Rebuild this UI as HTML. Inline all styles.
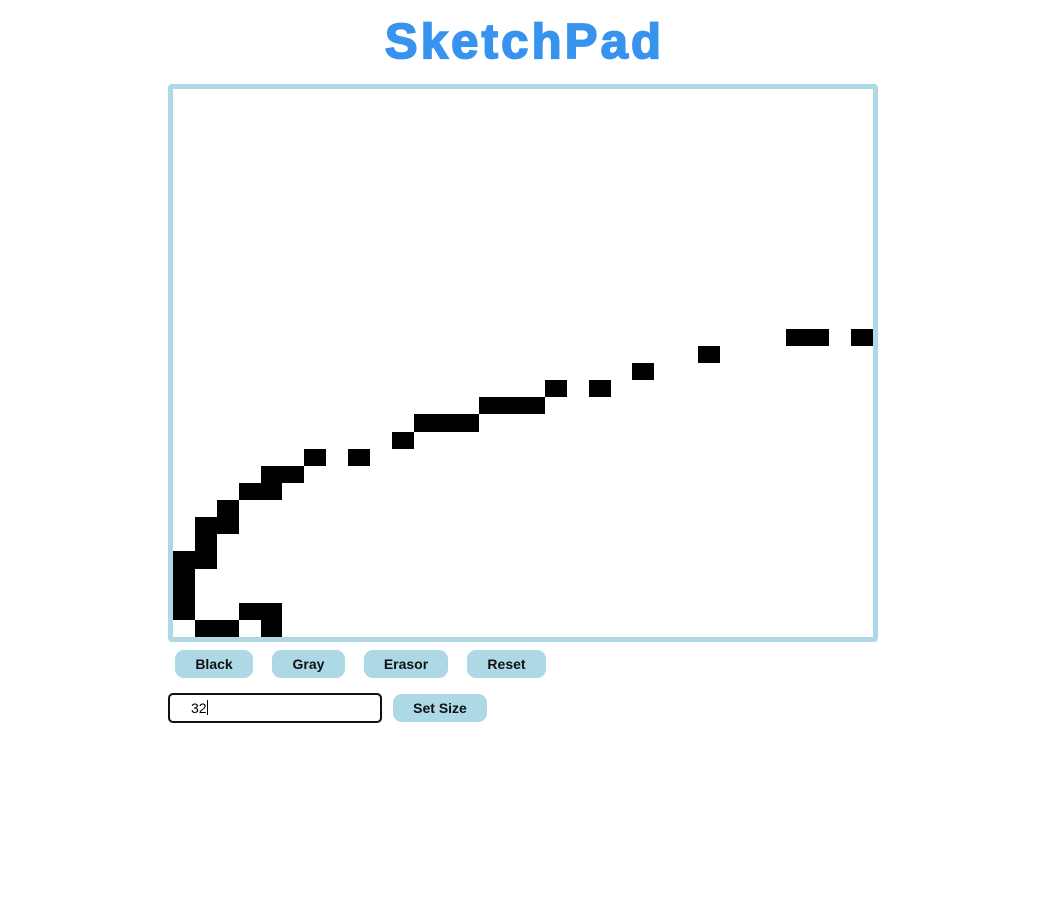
<!DOCTYPE html>
<html><head><meta charset="utf-8"><style>
body{margin:0;background:#fff;width:1060px;height:923px;position:relative;font-family:"Liberation Sans",Arial,sans-serif;}
h1{position:absolute;left:0;width:1046px;top:16px;margin:0;text-align:center;font-size:49px;font-weight:bold;color:#3793ee;-webkit-text-stroke:1.8px #3793ee;letter-spacing:3.2px;padding-left:3px;box-sizing:border-box;line-height:52px;}
#pad{position:absolute;left:168px;top:84px;width:700px;height:548px;border:5px solid #add8e6;border-radius:4px;display:grid;grid-template-columns:repeat(32,1fr);grid-template-rows:repeat(32,1fr);background:#fff;}
#pad div{background:#000;}
.btn{position:absolute;background:#add8e6;border-radius:9px;font-size:14px;font-weight:bold;color:#111;text-align:center;line-height:28px;height:28px;top:650px;}
#inp{position:absolute;left:168px;top:693px;width:210px;height:26px;border:2px solid #111;border-radius:5px;font-size:14px;line-height:26px;}
</style></head><body>
<h1>SketchPad</h1>
<div id="pad">
<div style="grid-row:15;grid-column:29"></div><div style="grid-row:15;grid-column:30"></div><div style="grid-row:15;grid-column:32"></div>
<div style="grid-row:16;grid-column:25"></div>
<div style="grid-row:17;grid-column:22"></div>
<div style="grid-row:18;grid-column:18"></div><div style="grid-row:18;grid-column:20"></div>
<div style="grid-row:19;grid-column:15"></div><div style="grid-row:19;grid-column:16"></div><div style="grid-row:19;grid-column:17"></div>
<div style="grid-row:20;grid-column:12"></div><div style="grid-row:20;grid-column:13"></div><div style="grid-row:20;grid-column:14"></div>
<div style="grid-row:21;grid-column:11"></div>
<div style="grid-row:22;grid-column:7"></div><div style="grid-row:22;grid-column:9"></div>
<div style="grid-row:23;grid-column:5"></div><div style="grid-row:23;grid-column:6"></div>
<div style="grid-row:24;grid-column:4"></div><div style="grid-row:24;grid-column:5"></div>
<div style="grid-row:25;grid-column:3"></div>
<div style="grid-row:26;grid-column:2"></div><div style="grid-row:26;grid-column:3"></div>
<div style="grid-row:27;grid-column:2"></div>
<div style="grid-row:28;grid-column:1"></div><div style="grid-row:28;grid-column:2"></div>
<div style="grid-row:29;grid-column:1"></div>
<div style="grid-row:30;grid-column:1"></div>
<div style="grid-row:31;grid-column:1"></div><div style="grid-row:31;grid-column:4"></div><div style="grid-row:31;grid-column:5"></div>
<div style="grid-row:32;grid-column:2"></div><div style="grid-row:32;grid-column:3"></div><div style="grid-row:32;grid-column:5"></div>
</div>
<div class="btn" style="left:175px;width:78px">Black</div>
<div class="btn" style="left:272px;width:73px">Gray</div>
<div class="btn" style="left:364px;width:84px">Erasor</div>
<div class="btn" style="left:467px;width:79px">Reset</div>
<div id="inp"><span style="margin-left:21px">32</span><span style="display:inline-block;width:1px;height:15px;background:#000;vertical-align:-2px"></span></div>
<div class="btn" style="left:393px;top:694px;width:94px">Set Size</div>
</body></html>
